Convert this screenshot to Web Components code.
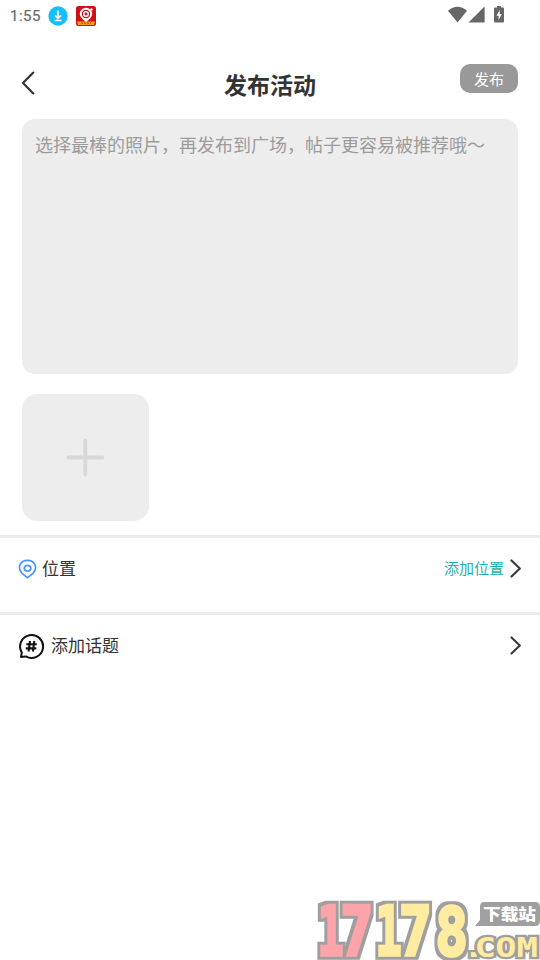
<!DOCTYPE html>
<html lang="zh-CN"><head><meta charset="utf-8"><title>发布活动</title>
<style>html,body{margin:0;height:100%;background:#fff}body{font-family:"Noto Sans CJK SC",sans-serif;color:#333}</style></head>
<body><publish-page></publish-page>
<script>
function define(name, html){
  const t=document.createElement('template'); t.innerHTML=html;
  customElements.define(name, class extends HTMLElement{
    constructor(){super();this.attachShadow({mode:'open'}).append(t.content.cloneNode(true));}
  });
}
define('status-bar', `<style>
:host{display:flex;height:32px;box-sizing:border-box;padding:0 35px 0 10px;align-items:center;justify-content:space-between;color:#6a6a6a}
.l{display:flex;align-items:center;height:32px}
.t{font:400 15px/32px Roboto,sans-serif;letter-spacing:.5px;width:38px;-webkit-text-stroke:.2px #6a6a6a}
svg{display:block;flex:none}</style>
<div class="l"><span class="t">1:55</span>
<svg width="20" height="20" viewBox="0 0 20 20"><circle cx="10" cy="10" r="9.700" fill="#13bffc"/><path d="M10 4.500v7.500M7 9.300l3 3 3-3M6.500 14.500h7" fill="none" stroke="#fff" stroke-width="1.700"/></svg>
<svg width="20" height="20" viewBox="0 0 20 20" style="margin-left:8px"><rect width="20" height="20" rx="2.500" fill="#cd1016"/><path d="M10 16.200 5.700 12.300a6.200 6.200 0 1 1 8.600 0z" fill="#fff"/><circle cx="10" cy="8" r="4.200" fill="#cd1016"/><circle cx="10" cy="8" r="3" fill="#fff"/><circle cx="10" cy="8" r="1.400" fill="#cd1016"/><circle cx="15.500" cy="3.500" r="1.200" fill="#fff"/><path d="M1 15.500h18l-1 3.500H2z" fill="#f7a20c"/><path d="M5 17.300h2m1 0h2m1 0h2m1 0h1" stroke="#c8501b" stroke-width="1.500"/></svg></div>
<svg width="57" height="20" viewBox="448 6 57 20" fill="#666"><path d="M448 10.700Q457.500 3 467 10.700L457.500 22.500Z"/><path d="M484.600 6.500V22.500H468.500Z"/><path d="M497 6h4v1.500h2q1 0 1 1V21.600q0 1-1 1h-8q-1 0-1-1V8.500q0-1 1-1h2z"/><path d="m499.700 10-3.200 5.800h2.100V20l3.200-6h-2.100z" fill="#fff"/></svg>`);
define('page-header', `<style>
:host{display:grid;grid-template-columns:76px 1fr 76px;height:87px;padding:0 4px;box-sizing:border-box;align-items:start}
svg{display:block;margin:38px 0 0 16px}
h1{font:700 23px/34px "Noto Sans CJK SC",sans-serif;margin:35px 0 0;text-align:center;color:#333}
button{all:unset;box-sizing:border-box;width:58px;height:29px;margin:32px 18px 0 0;justify-self:end;border-radius:10px;background:#999;color:#fff;font:400 15px/27px "Noto Sans CJK SC",sans-serif;text-align:center}</style>
<svg width="16" height="26" viewBox="0 0 16 26"><path d="M13.300 2.600 3 13 13.300 23.400" fill="none" stroke="#333" stroke-width="2.200" stroke-linecap="round" stroke-linejoin="round"/></svg>
<h1><slot></slot></h1><button>发布</button>`);
define('post-editor', `<style>:host{display:block;height:255px;box-sizing:border-box;margin:0 22px;padding:12px 13px;border-radius:13px;background:#ededed;color:#9c9c9c;font-size:18px;line-height:27px;white-space:nowrap}</style><slot></slot>`);
define('photo-tile', `<style>:host{display:flex;width:127px;height:127px;margin:20px 22px 14px;border-radius:15px;background:#ededed;align-items:center;justify-content:center}svg{display:block}</style>
<svg width="39" height="39" viewBox="0 0 39 39"><path d="M19.300 2.500v34M2.300 19.500h34" stroke="#d8d8d8" stroke-width="3.800" stroke-linecap="round"/></svg>`);
define('option-row', `<style>:host{display:flex;height:77px;box-sizing:border-box;border-top:3px solid #ededed;padding:0 18px 13px;align-items:center;font-size:17px;line-height:26px}
.label{flex:1;margin-top:-1px}::slotted([slot=value]){color:#1bb1ac;font-size:15px;margin:-1px 6px 0 0}svg{display:block}</style>
<slot name="icon"></slot><span class="label"><slot></slot></span><slot name="value"></slot>
<svg width="12" height="20" viewBox="0 0 12 20"><path d="M1.500 1.500 9.800 9.500 1.500 17.500" fill="none" stroke="#3c3c3c" stroke-width="2.200" stroke-linecap="round" stroke-linejoin="round"/></svg>`);
define('pin-icon', `<style>:host{display:block;width:24px;height:20px}svg{display:block}</style><svg width="19" height="20" viewBox="0 0 19 20" fill="none" stroke="#4a94fb" stroke-width="1.700"><path d="M9.500 18.600 4 14.300C-1.200 8.500 2.200 1.300 9.500 1.300s10.700 7.200 5.500 13z" stroke-linejoin="round"/><ellipse cx="9.500" cy="9.200" rx="3.300" ry="2.800"/></svg>`);
define('topic-icon', `<style>:host{display:block;width:33px;height:26px}svg{display:block}</style><svg width="28" height="27" viewBox="0.5 0 28 27" fill="none" stroke="#111" stroke-width="2"><path d="M4.300 19.500A11.500 11.500 0 1 1 8.300 23.400L3.500 23.900z" stroke-linejoin="round"/><path d="m12.500 8-1.400 10.500M16.800 8l-1.400 10.500M8.800 11.200h10.500M8.300 15.400h10.500" stroke-width="2.100"/></svg>`);
define('site-mark', `<style>:host{display:block;width:224px;height:62px}svg{display:block}text{font-family:"DejaVu Sans Mono",monospace;font-weight:700}</style>
<svg width="224" height="62" viewBox="316 898 224 62">
<defs><filter id="edge" x="-20%" y="-20%" width="140%" height="140%"><feMorphology in="SourceAlpha" operator="dilate" radius="3" result="wide"/><feFlood flood-color="#9f9f9f"/><feComposite in2="wide" operator="in" result="rim"/><feMerge><feMergeNode in="rim"/><feMergeNode in="SourceGraphic"/></feMerge></filter></defs>
<g filter="url(#edge)"><g font-size="68" stroke-width="3.500" stroke-linejoin="miter">
<g fill="#fca4aa" stroke="#fca4aa"><text transform="translate(317.500 955) scale(.64 1)">1</text><text transform="translate(340.500 955) scale(.8 1)">7</text></g>
<g fill="#ffeca0" stroke="#ffeca0"><text transform="translate(375.500 955) scale(.64 1)">1</text><text transform="translate(399 955) scale(.8 1)">7</text><text transform="translate(435.500 955) scale(.79 .98)">8</text></g></g></g>
<path d="M484 902h51q5 0 5 5v14q0 5-5 5h-60l5-6v-13q0-5 4-5z" fill="#9f9f9f"/>
<text x="483" y="920" font-size="15.500" fill="#fff" textLength="53" lengthAdjust="spacingAndGlyphs" style="font-family:'Noto Sans CJK SC',sans-serif;font-weight:900">下载站</text>
<text transform="translate(463 957) scale(1.320 1)" x="0 8.700 24.500 40.500" y="0" font-size="27" fill="#ffeca0" stroke="#9f9f9f" stroke-width="4.500" paint-order="stroke" stroke-linejoin="miter">.COM</text></svg>`);
define('publish-page', `<style>:host{display:flex;flex-direction:column;width:540px;height:960px;overflow:hidden;background:#fff}site-mark{margin:auto 0 0 auto}</style>
<status-bar></status-bar><page-header>发布活动</page-header>
<post-editor>选择最棒的照片，再发布到广场，帖子更容易被推荐哦～</post-editor>
<photo-tile></photo-tile>
<option-row><pin-icon slot="icon"></pin-icon>位置<span slot="value">添加位置</span></option-row>
<option-row><topic-icon slot="icon"></topic-icon>添加话题</option-row>
<site-mark></site-mark>`);
</script></body></html>
